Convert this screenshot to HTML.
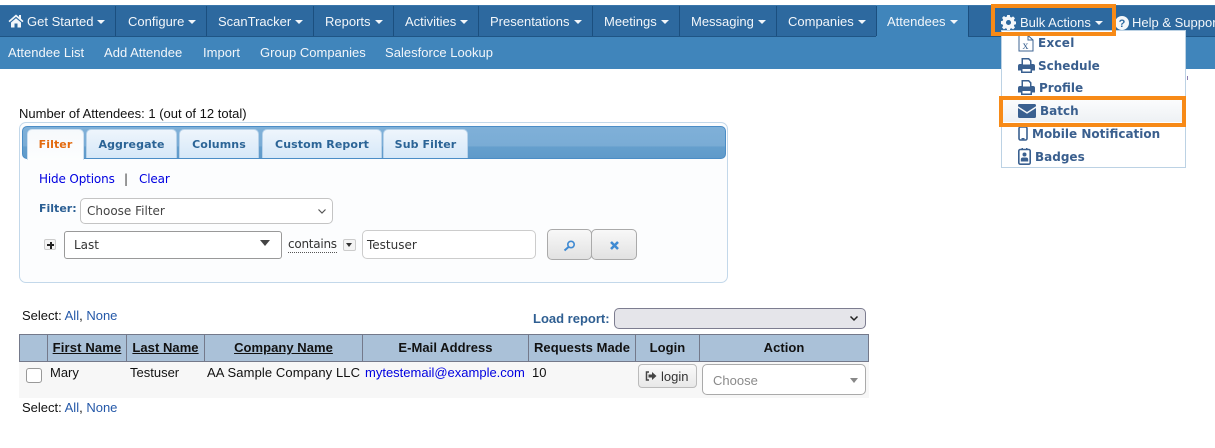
<!DOCTYPE html>
<html><head><meta charset="utf-8"><title>Attendees</title>
<style>
html,body{margin:0;padding:0;background:#fff;width:1215px;height:448px;overflow:hidden;font-family:"Liberation Sans",sans-serif;font-size:13px;color:#111}
.a{position:absolute;white-space:nowrap}
.nav{position:absolute;left:0;top:5px;width:1215px;height:31px;background:#2d699f;border-top:1px solid #3a76aa;box-sizing:border-box}
.sub{position:absolute;left:0;top:36px;width:1215px;height:33px;background:#4085bb;border-top:1px solid #1f5585;box-sizing:border-box}
.sep{position:absolute;top:6px;width:1px;height:30px;background:#1b4f7f}
.n{position:absolute;top:14px;color:#f2f6fa;font-size:13px;line-height:16px;white-space:nowrap}
.n i{display:inline-block;width:0;height:0;border-left:4px solid transparent;border-right:4px solid transparent;border-top:4px solid #f2f6fa;vertical-align:2px;margin-left:4px}
.s{position:absolute;top:45px;color:#f2f6fa;font-size:13px;line-height:16px;white-space:nowrap;letter-spacing:.02px}
.v{font-family:"DejaVu Sans",sans-serif}
.tab{position:absolute;top:129px;height:29px;box-sizing:border-box;border-radius:5px 5px 0 0;background:linear-gradient(#eef5fc,#d6e8f8);border:1px solid #b7d2ea;border-bottom:none;color:#2b6496;font:bold 11px/30px "DejaVu Sans",sans-serif;text-align:center;white-space:nowrap;letter-spacing:.1px}
.m{position:absolute;color:#3a5f8e;font:bold 12px/16px "DejaVu Sans",sans-serif;white-space:nowrap}
.th{position:absolute;top:335px;height:27px;box-sizing:border-box;border-left:1px solid #74798a;font:bold 13px/26px "Liberation Sans",sans-serif;text-align:center;color:#111;white-space:nowrap;letter-spacing:.05px}
.orange{position:absolute;border:4px solid #f78a17;box-sizing:border-box}
</style></head><body>

<div class="nav"></div>
<div class="sub"></div>
<div class="a" style="left:876px;top:5px;width:92px;height:33px;background:#4085bb"></div>
<div class="sep" style="left:115px"></div><div class="sep" style="left:206px"></div><div class="sep" style="left:313px"></div><div class="sep" style="left:393px"></div><div class="sep" style="left:478px"></div><div class="sep" style="left:592px"></div><div class="sep" style="left:679px"></div><div class="sep" style="left:776px"></div><div class="sep" style="left:876px"></div><div class="sep" style="left:968px"></div>

<svg class="a" style="left:8px;top:14px" width="16" height="14" viewBox="0 0 16 14"><path fill="#f2f6fa" d="M8 0.5 L0.5 7 L1.6 8.2 L8 2.7 L14.4 8.2 L15.5 7 L13 4.8 V1 H11 V3 Z M3 8.5 V13.5 H6.5 V9.5 H9.5 V13.5 H13 V8.5 L8 4.2 Z"/></svg>
<div class="n" style="left:27px">Get Started<i></i></div>
<div class="n" style="left:128px">Configure<i></i></div>
<div class="n" style="left:218px">ScanTracker<i></i></div>
<div class="n" style="left:325px">Reports<i></i></div>
<div class="n" style="left:405px">Activities<i></i></div>
<div class="n" style="left:490px">Presentations<i></i></div>
<div class="n" style="left:604px">Meetings<i></i></div>
<div class="n" style="left:691px">Messaging<i></i></div>
<div class="n" style="left:788px">Companies<i></i></div>
<div class="n" style="left:887px">Attendees<i></i></div>

<div class="s" style="left:8px">Attendee List</div>
<div class="s" style="left:104px">Add Attendee</div>
<div class="s" style="left:203px">Import</div>
<div class="s" style="left:260px">Group Companies</div>
<div class="s" style="left:385px">Salesforce Lookup</div>

<!-- right nav -->
<svg class="a" style="left:1001px;top:15px" width="15" height="15" viewBox="0 0 16 16"><path fill="#f4f7fa" fill-rule="evenodd" d="M6.6 0h2.8l.4 2.1 1.3.6 1.8-1.2 2 2-1.2 1.8.6 1.3 2.1.4v2.8l-2.1.4-.6 1.3 1.2 1.8-2 2-1.8-1.2-1.3.6-.4 2.1H6.6l-.4-2.1-1.3-.6-1.8 1.2-2-2 1.2-1.8-.6-1.3L-.4 9.4V6.6l2.1-.4.6-1.3-1.2-1.8 2-2 1.8 1.2 1.3-.6zM8 5.3a2.7 2.7 0 1 0 0 5.4 2.7 2.7 0 0 0 0-5.4z"/></svg>
<div class="n" style="left:1020px;top:15px">Bulk Actions<i></i></div>
<svg class="a" style="left:1115px;top:16px" width="14" height="14" viewBox="0 0 14 14"><circle cx="7" cy="7" r="7" fill="#f4f7fa"/><text x="7" y="11" font-family="Liberation Sans" font-weight="bold" font-size="11" text-anchor="middle" fill="#2d699f">?</text></svg>
<div class="n" style="left:1132px;top:15px">Help &amp; Support</div>

<!-- dropdown -->
<div class="a" style="left:1001px;top:30px;width:185px;height:138px;background:#fff;border:1px solid #bcd2e4;box-sizing:border-box"></div>
<div class="a" style="left:1003px;top:100px;width:180px;height:22px;background:linear-gradient(#fbfcfd,#eef1f4)"></div>

<svg class="a" style="left:1018px;top:34px" width="16" height="18" viewBox="0 0 16 18"><path fill="#fff" stroke="#3f6593" stroke-width="1" d="M1 1.5 H10 L15 6 V17 H1 Z M10 1.5 V6 H15"/><text x="7.5" y="15" font-family="Liberation Serif" font-size="12" text-anchor="middle" fill="#3f6593">x</text></svg>
<div class="m" style="left:1038px;top:35px;letter-spacing:.25px">Excel</div>

<svg class="a" style="left:1018px;top:58px" width="17" height="15" viewBox="0 0 17 15"><path fill="#3a6090" fill-rule="evenodd" d="M3.5 0 H11 L13.5 2.5 V6 H15 A2 2 0 0 1 17 8 V12.5 H14 V15 H3 V12.5 H0 V8 A2 2 0 0 1 2 6 H3.5 Z M5 1.5 V6.5 H12 V3.2 L10.3 1.5 Z M4.5 11 V13.5 H12.5 V11 Z"/></svg>
<div class="m" style="left:1038px;top:58px">Schedule</div>

<svg class="a" style="left:1018px;top:80px" width="17" height="15" viewBox="0 0 17 15"><path fill="#3a6090" fill-rule="evenodd" d="M3.5 0 H11 L13.5 2.5 V6 H15 A2 2 0 0 1 17 8 V12.5 H14 V15 H3 V12.5 H0 V8 A2 2 0 0 1 2 6 H3.5 Z M5 1.5 V6.5 H12 V3.2 L10.3 1.5 Z M4.5 11 V13.5 H12.5 V11 Z"/></svg>
<div class="m" style="left:1039px;top:80px">Profile</div>

<svg class="a" style="left:1018px;top:104px" width="18" height="14" viewBox="0 0 18 14"><path fill="#3a6090" d="M1.5 0 H16.5 A1.5 1.5 0 0 1 18 1.5 V2.2 L9 8 L0 2.2 V1.5 A1.5 1.5 0 0 1 1.5 0 Z M0 4 L9 9.8 L18 4 V12.5 A1.5 1.5 0 0 1 16.5 14 H1.5 A1.5 1.5 0 0 1 0 12.5 Z"/></svg>
<div class="m" style="left:1040px;top:103px">Batch</div>

<svg class="a" style="left:1018px;top:126px" width="10" height="15" viewBox="0 0 10 15"><rect x="1" y="1" width="8" height="13" rx="1.5" fill="#fff" stroke="#3a6090" stroke-width="1.6"/><rect x="3.5" y="12" width="3" height="1.4" fill="#3a6090"/></svg>
<div class="m" style="left:1032px;top:126px">Mobile Notification</div>

<svg class="a" style="left:1018px;top:148px" width="13" height="17" viewBox="0 0 13 17"><rect x="0.8" y="1.5" width="11.4" height="14.7" rx="1.5" fill="#fff" stroke="#3a6090" stroke-width="1.6"/><rect x="3.5" y="0" width="1.5" height="2" fill="#3a6090"/><rect x="8" y="0" width="1.5" height="2" fill="#3a6090"/><circle cx="6.5" cy="6.5" r="2" fill="#3a6090"/><path fill="#3a6090" d="M2.8 13.5 V11.5 A2 2 0 0 1 4.8 9.5 H8.2 A2 2 0 0 1 10.2 11.5 V13.5 Z"/></svg>
<div class="m" style="left:1035px;top:149px">Badges</div>

<div class="a" style="left:1187px;top:76px;width:1px;height:4px;background:#8a7db0"></div>

<div class="orange" style="left:991px;top:4px;width:125px;height:32px"></div>
<div class="orange" style="left:999px;top:96px;width:187px;height:31px"></div>

<!-- filter -->
<div class="a" style="left:19px;top:106px;line-height:15px;font-size:13px;color:#111">Number of Attendees: 1 (out of 12 total)</div>
<div class="a" style="left:19px;top:122px;width:709px;height:161px;box-sizing:border-box;border:1px solid #c3d8ea;border-radius:7px;background:#fcfdfe"></div>
<div class="a" style="left:22px;top:126px;width:704px;height:33px;box-sizing:border-box;border:1px solid #4b8dc6;border-radius:5px;background:linear-gradient(#7fb0d8 0%,#7aacd5 60%,#659fcd 65%,#5f9aca 100%)"></div>
<div class="tab" style="left:27px;width:57px;background:linear-gradient(#f6f9fc,#fdfefe);color:#e36a0e;border-color:#cfe0f0;height:31px">Filter</div>
<div class="tab" style="left:86px;width:91px">Aggregate</div>
<div class="tab" style="left:179px;width:80px">Columns</div>
<div class="tab" style="left:262px;width:120px">Custom Report</div>
<div class="tab" style="left:383px;width:85px">Sub Filter</div>

<div class="a v" style="left:39px;top:171px;font-size:12px;letter-spacing:-.15px;line-height:16px;color:#0000e0">Hide Options</div>
<div class="a v" style="left:124px;top:171px;font-size:12px;line-height:16px;color:#333">|</div>
<div class="a v" style="left:139px;top:171px;font-size:12px;letter-spacing:-.15px;line-height:16px;color:#0000e0">Clear</div>

<div class="a v" style="left:39px;top:201px;font-size:11px;font-weight:bold;line-height:16px;color:#2b5f94">Filter:</div>
<div class="a v" style="left:80px;top:198px;width:253px;height:26px;box-sizing:border-box;border:1px solid #c4c4c4;border-radius:5px;background:#fff;font-size:12px;line-height:24px;padding-left:6px;color:#444">Choose Filter</div>
<svg class="a" style="left:317px;top:208px" width="10" height="7" viewBox="0 0 10 7"><path d="M1.5 1.5 L5 5 L8.5 1.5" fill="none" stroke="#555" stroke-width="1.2"/></svg>

<div class="a" style="left:44px;top:239px;width:12px;height:11px;box-sizing:border-box;border:1px solid #ccc;border-radius:2px;background:#f4f4f4"></div>
<div class="a" style="left:47px;top:244px;width:7px;height:2px;background:#222"></div>
<div class="a" style="left:49.5px;top:241.5px;width:2px;height:7px;background:#222"></div>
<div class="a v" style="left:64px;top:231px;width:218px;height:28px;box-sizing:border-box;border:1px solid #999;border-radius:3px;background:#fff;font-size:12px;line-height:26px;padding-left:9px;color:#333">Last</div>
<div class="a" style="left:260px;top:240px;width:0;height:0;border-left:5px solid transparent;border-right:5px solid transparent;border-top:6px solid #444"></div>
<div class="a v" style="left:288px;top:237px;font-size:12px;letter-spacing:-.25px;line-height:15px;color:#333;border-bottom:1px dotted #555">contains</div>
<div class="a" style="left:343px;top:239px;width:13px;height:12px;box-sizing:border-box;border:1px solid #ccc;border-radius:2px;background:#f4f4f4"></div>
<div class="a" style="left:346px;top:243px;width:0;height:0;border-left:3.5px solid transparent;border-right:3.5px solid transparent;border-top:4px solid #333"></div>
<div class="a v" style="left:362px;top:230px;width:174px;height:29px;box-sizing:border-box;border:1px solid #ccc;border-radius:5px;background:#fff;font-size:12px;line-height:29px;padding-left:4px;color:#333">Testuser</div>

<div class="a" style="left:547px;top:229px;width:45px;height:31px;box-sizing:border-box;border:1px solid #aaa;border-radius:5px;background:linear-gradient(#f8f8f8,#e2e2e2)"></div>
<div class="a" style="left:591px;top:229px;width:46px;height:31px;box-sizing:border-box;border:1px solid #aaa;border-radius:5px;background:linear-gradient(#f8f8f8,#e2e2e2)"></div>
<svg class="a" style="left:563px;top:240px" width="13" height="12" viewBox="0 0 13 12"><circle cx="8" cy="4.5" r="3.2" fill="none" stroke="#3f8ad2" stroke-width="1.6"/><path d="M5.5 7 L1.5 10.5" stroke="#3f8ad2" stroke-width="2"/></svg>
<svg class="a" style="left:610px;top:241px" width="9" height="9" viewBox="0 0 9 9"><path d="M1 1 L8 8 M8 1 L1 8" stroke="#3f8ad2" stroke-width="2.6"/></svg>

<!-- table -->
<div class="a" style="left:22px;top:308px;font-size:13px;line-height:15px;color:#111">Select: <span style="color:#2458a8">All</span>, <span style="color:#2458a8">None</span></div>
<div class="a" style="left:533px;top:311px;font-size:13px;font-weight:bold;line-height:16px;color:#2f5f92">Load report:</div>
<div class="a" style="left:614px;top:308px;width:252px;height:21px;box-sizing:border-box;border:1px solid #7d7d90;border-radius:5px;background:#e5e5ea"></div>
<svg class="a" style="left:849px;top:315px" width="10" height="7" viewBox="0 0 10 7"><path d="M1.5 1.5 L5 5 L8.5 1.5" fill="none" stroke="#222" stroke-width="1.5"/></svg>

<div class="a" style="left:19px;top:334px;width:850px;height:28px;box-sizing:border-box;background:#aac1d8;border:1px solid #74798a"></div>
<div class="th" style="left:47px;width:79px;letter-spacing:.15px"><u>First Name</u></div>
<div class="th" style="left:126px;width:78px"><u>Last Name</u></div>
<div class="th" style="left:204px;width:158px"><u>Company Name</u></div>
<div class="th" style="left:362px;width:166px">E-Mail Address</div>
<div class="th" style="left:528px;width:107px">Requests Made</div>
<div class="th" style="left:635px;width:64px">Login</div>
<div class="th" style="left:699px;width:169px">Action</div>

<div class="a" style="left:19px;top:362px;width:850px;height:36px;background:#f7f7f7"></div>
<div class="a" style="left:26px;top:368px;width:16px;height:15px;box-sizing:border-box;border:1px solid #999;border-radius:3px;background:#fff"></div>
<div class="a" style="left:50px;top:365px;line-height:15px;font-size:13px">Mary</div>
<div class="a" style="left:130px;top:365px;line-height:15px;font-size:13px">Testuser</div>
<div class="a" style="left:207px;top:365px;line-height:15px;font-size:13px;letter-spacing:.1px">AA Sample Company LLC</div>
<div class="a" style="left:365px;top:365px;line-height:15px;font-size:13px;color:#0000e0">mytestemail@example.com</div>
<div class="a" style="left:532px;top:365px;line-height:15px;font-size:13px">10</div>

<div class="a" style="left:638px;top:364px;width:59px;height:24px;box-sizing:border-box;border:1px solid #bbb;border-radius:4px;background:linear-gradient(#fafafa,#e8e8e8);font-size:13px;line-height:23px;padding-left:22px;color:#333">login</div>
<svg class="a" style="left:645px;top:371px" width="12" height="10" viewBox="0 0 12 10"><path d="M4 1 H1.5 V9 H4" fill="none" stroke="#444" stroke-width="1.5"/><path fill="#444" d="M3.5 3.5 H7 V1 L11.5 5 L7 9 V6.5 H3.5 Z"/></svg>
<div class="a" style="left:702px;top:364px;width:164px;height:31px;box-sizing:border-box;border:1px solid #aaa;border-radius:5px;background:#fff;font-size:13px;line-height:31px;padding-left:10px;color:#8a8a8a">Choose</div>
<div class="a" style="left:850px;top:378px;width:0;height:0;border-left:4px solid transparent;border-right:4px solid transparent;border-top:5px solid #888"></div>

<div class="a" style="left:22px;top:400px;font-size:13px;line-height:15px;color:#111">Select: <span style="color:#2458a8">All</span>, <span style="color:#2458a8">None</span></div>
</body></html>
